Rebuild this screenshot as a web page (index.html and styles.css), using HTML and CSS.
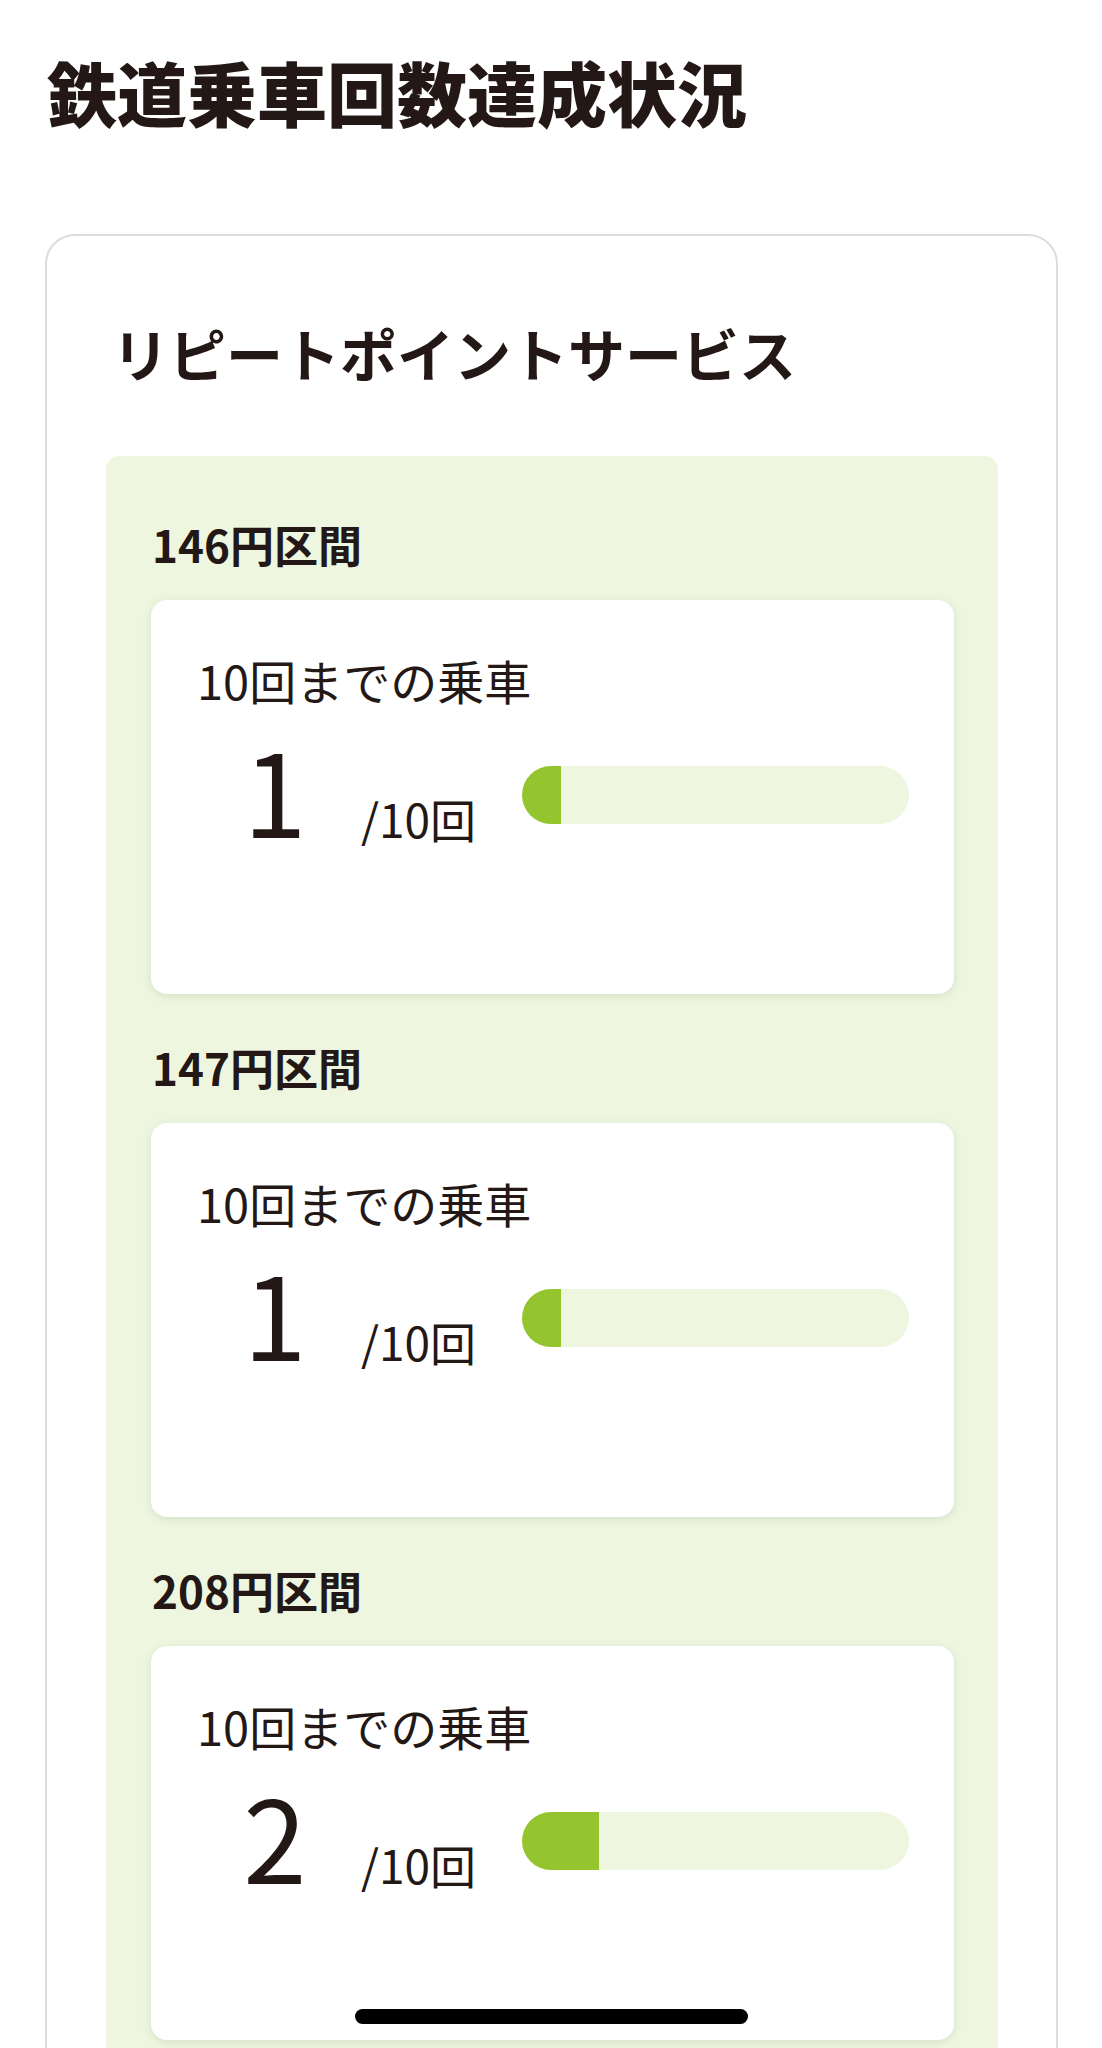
FILE: index.html
```html
<!DOCTYPE html>
<html lang="ja">
<head>
<meta charset="utf-8">
<title>鉄道乗車回数達成状況</title>
<link rel="stylesheet" href="styles.css">
</head>
<body>
<main class="page">
  <h1 class="page-title">鉄道乗車回数達成状況</h1>
  <section class="service-card">
    <h2 class="service-title">リピートポイントサービス</h2>
    <div class="panel">
      <div class="section">
        <h3 class="section-label">146円区間</h3>
        <div class="ride-card">
          <p class="ride-label">10回までの乗車</p>
          <div class="ride-row">
            <div class="count">
              <span class="num">1</span>
              <span class="unit">/10回</span>
            </div>
            <div class="bar"><div class="bar-fill" style="width:10%"></div></div>
          </div>
        </div>
      </div>
      <div class="section">
        <h3 class="section-label">147円区間</h3>
        <div class="ride-card">
          <p class="ride-label">10回までの乗車</p>
          <div class="ride-row">
            <div class="count">
              <span class="num">1</span>
              <span class="unit">/10回</span>
            </div>
            <div class="bar"><div class="bar-fill" style="width:10%"></div></div>
          </div>
        </div>
      </div>
      <div class="section">
        <h3 class="section-label">208円区間</h3>
        <div class="ride-card">
          <p class="ride-label">10回までの乗車</p>
          <div class="ride-row">
            <div class="count">
              <span class="num">2</span>
              <span class="unit">/10回</span>
            </div>
            <div class="bar"><div class="bar-fill" style="width:20%"></div></div>
          </div>
        </div>
      </div>
    </div>
  </section>
</main>
<div class="home-indicator"></div>
</body>
</html>
```

FILE: styles.css
```css
* {
  box-sizing: border-box;
}

html, body {
  margin: 0;
  padding: 0;
  background: #ffffff;
}

body {
  font-family: "Noto Sans CJK JP", "Noto Sans", sans-serif;
  color: #231815;
}

.page {
  padding: 0 44px 0 45px;
}

.page-title {
  margin: 43px 0 93px 2px;
  font-size: 70px;
  line-height: 98px;
  font-weight: 900;
  letter-spacing: 0;
}

.service-card {
  border: 2px solid #dcdcdc;
  border-radius: 30px;
  padding: 76px 58px 0 59px;
}

.service-title {
  margin: 0 0 64px 6px;
  font-size: 57px;
  line-height: 80px;
  font-weight: 700;
}

.panel {
  background: #eef6e0;
  border-radius: 14px;
  padding: 58px 44px 60px 45px;
}

.section {
  margin-bottom: 43px;
}

.section-label {
  margin: 0 0 26px 1px;
  font-size: 44px;
  line-height: 60px;
  font-weight: 700;
}

.ride-card {
  background: #ffffff;
  border-radius: 16px;
  box-shadow: 0 2px 9px rgba(90, 110, 50, 0.16);
  padding: 47px 45px 145px 46px;
}

.ride-label {
  margin: 0;
  font-size: 47px;
  line-height: 66px;
  font-weight: 400;
}

.ride-row {
  display: flex;
  align-items: flex-start;
  margin-top: 16px;
}

.count {
  display: flex;
  align-items: baseline;
}

.num {
  width: 156px;
  text-align: center;
  font-size: 114px;
  line-height: 120px;
  font-weight: 400;
}

.unit {
  margin-left: 8px;
  font-size: 46px;
  line-height: 60px;
  font-weight: 400;
}

.bar {
  flex: 1;
  height: 58px;
  margin-top: 37px;
  margin-left: 46px;
  background: #eef6e0;
  border-radius: 29px;
  overflow: hidden;
}

.bar-fill {
  height: 100%;
  background: #95c52e;
}

.home-indicator {
  position: fixed;
  left: 50%;
  bottom: 24px;
  width: 393px;
  height: 15px;
  margin-left: -196px;
  background: #000000;
  border-radius: 8px;
}
```
